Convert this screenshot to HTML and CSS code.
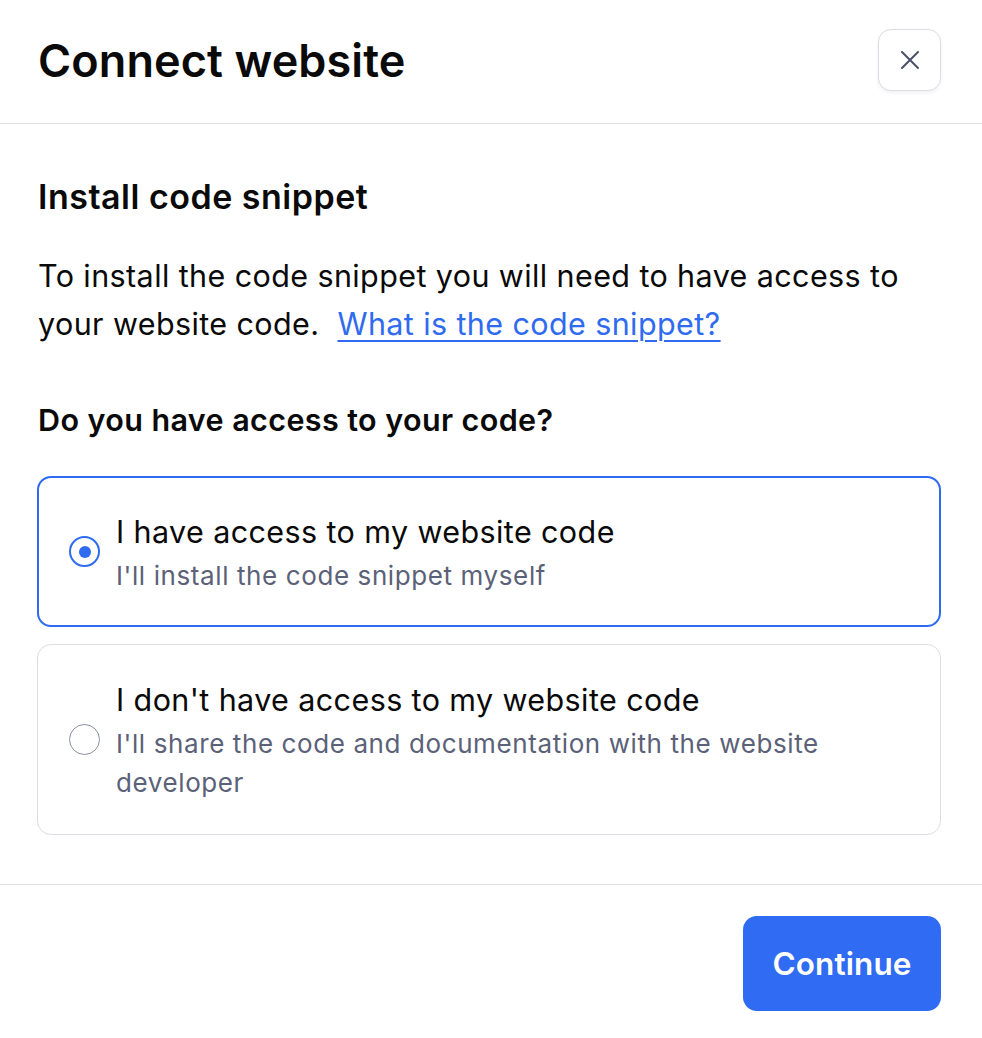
FILE: index.html
```html
<!DOCTYPE html>
<html lang="en">
<head>
<meta charset="utf-8">
<title>Connect website</title>
<link rel="stylesheet" href="styles.css">
</head>
<body>
<div class="modal">
  <header class="modal-header">
    <h1 class="modal-title">Connect website</h1>
    <button class="close-btn" aria-label="Close">
      <svg width="22" height="22" viewBox="0 0 22 22" fill="none" stroke="#4b5068" stroke-width="2" stroke-linecap="round"><path d="M3 3L19 19M19 3L3 19"/></svg>
    </button>
  </header>
  <main class="modal-body">
    <h2 class="section-title">Install code snippet</h2>
    <p class="desc">To install the code snippet you will need to have access to your website code.&nbsp; <a href="#" class="link">What is the code snippet?</a></p>
    <h3 class="question">Do you have access to your code?</h3>
    <div class="options">
      <label class="option selected">
        <span class="radio checked"></span>
        <span class="option-text">
          <span class="option-title">I have access to my website code</span>
          <span class="option-sub">I'll install the code snippet myself</span>
        </span>
      </label>
      <label class="option">
        <span class="radio"></span>
        <span class="option-text">
          <span class="option-title">I don't have access to my website code</span>
          <span class="option-sub">I'll share the code and documentation with the website developer</span>
        </span>
      </label>
    </div>
  </main>
  <footer class="modal-footer">
    <button class="primary-btn">Continue</button>
  </footer>
</div>
</body>
</html>
```

FILE: styles.css
```css
* { box-sizing: border-box; }
html, body { margin: 0; padding: 0; background: #ffffff; }
body {
  font-family: Inter, "Noto Sans", sans-serif;
  color: #0a0a0a;
  width: 982px;
}
.modal { display: flex; flex-direction: column; }
.modal-header {
  display: flex;
  align-items: flex-start;
  justify-content: space-between;
  height: 124px;
  padding: 29px 41px 0 38px;
  border-bottom: 1px solid #e2e2e6;
}
.modal-title {
  margin: 7px 0 0;
  font-size: 45px;
  font-weight: 600;
  line-height: 50px;
  letter-spacing: 0.1px;
}
.close-btn {
  width: 63px;
  height: 62px;
  border: 1px solid #dcdce3;
  border-radius: 13px;
  background: #fff;
  box-shadow: 0 2px 4px rgba(20, 20, 60, 0.06);
  display: flex;
  align-items: center;
  justify-content: center;
  padding: 0;
}
.modal-body {
  padding: 53px 41px 49px 38px;
}
.section-title {
  margin: 0;
  font-size: 34px;
  font-weight: 600;
  line-height: 40px;
  letter-spacing: 0.5px;
}
.desc {
  margin: 35px 0 0;
  font-size: 30.5px;
  line-height: 48px;
  font-weight: 400;
  letter-spacing: 0.4px;
}
.link { color: #2f6bf0; text-decoration: underline; text-underline-offset: 5px; text-decoration-thickness: 2px; }
.question {
  margin: 52px 0 0;
  font-size: 30.5px;
  font-weight: 600;
  line-height: 40px;
  letter-spacing: 0.4px;
}
.options {
  margin: 36px 0 0 -1px;
  display: flex;
  flex-direction: column;
  gap: 17px;
}
.option {
  display: flex;
  align-items: center;
  gap: 16px;
  border: 1px solid #dcdce3;
  border-radius: 14px;
  padding: 31px 30px 32px 31px;
}
.option.selected {
  border: 2px solid #2f6bf0;
  padding: 30px 29px 30px 30px;
}
.radio {
  flex: none;
  width: 31px;
  height: 31px;
  border-radius: 50%;
  border: 1.5px solid #8a8fa5;
  background: #fff;
  position: relative;
}
.radio.checked {
  border: 2px solid #2f6bf0;
}
.radio.checked::after {
  content: "";
  position: absolute;
  left: 50%; top: 50%;
  width: 12px; height: 12px;
  margin: -6px 0 0 -6px;
  border-radius: 50%;
  background: #2f6bf0;
}
.option-text { display: flex; flex-direction: column; }
.option-title {
  font-size: 30.5px;
  line-height: 48px;
  font-weight: 400;
  letter-spacing: 0.4px;
}
.option-sub {
  font-size: 26px;
  line-height: 39px;
  color: #5b6178;
  letter-spacing: 0.6px;
}
.modal-footer {
  border-top: 1px solid #e2e2e6;
  display: flex;
  justify-content: flex-end;
  padding: 31px 41px 27px 38px;
}
.primary-btn {
  width: 198px;
  height: 95px;
  border: none;
  border-radius: 14px;
  background: #2f6bf3;
  color: #fff;
  font-family: Inter, "Noto Sans", sans-serif;
  font-size: 31.5px;
  font-weight: 600;
  letter-spacing: 0.1px;
}
```
